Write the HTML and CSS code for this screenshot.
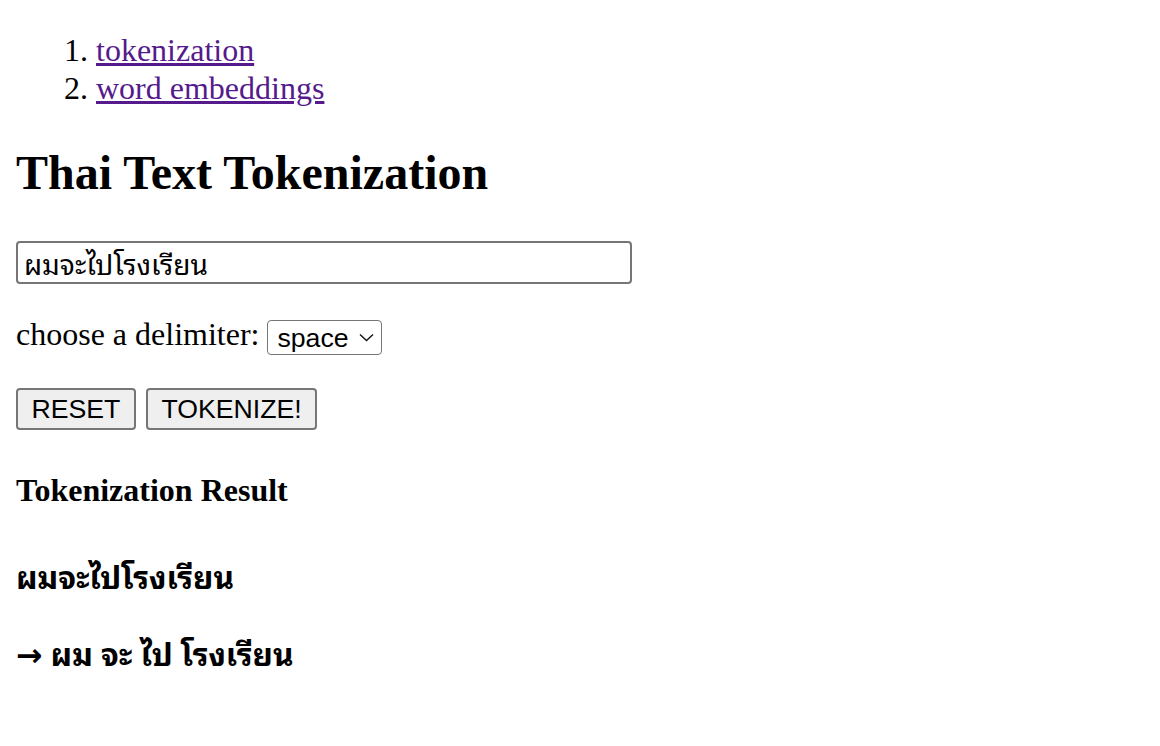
FILE: index.html
```html
<!DOCTYPE html>
<html lang="en">
<head>
<meta charset="utf-8">
<title>Thai Text Tokenization</title>
<link rel="stylesheet" href="styles.css">
</head>
<body>
<ol class="nav">
  <li><a href="#" class="nav-link">tokenization</a></li>
  <li><a href="#" class="nav-link">word embeddings</a></li>
</ol>
<h1 class="title">Thai Text Tokenization</h1>
<form class="tok-form">
  <input class="text-input" type="text" value="ผมจะไปโรงเรียน">
  <p class="delim">choose a delimiter: <span class="select-wrap"><select class="delim-select"><option>space</option></select><svg class="chev" width="15" height="9" viewBox="0 0 15 9"><path d="M1 1.5 L7.5 7.5 L14 1.5" fill="none" stroke="#111" stroke-width="1.4"/></svg></span></p>
  <div class="actions">
    <button type="button" class="btn">RESET</button>
    <button type="button" class="btn">TOKENIZE!</button>
  </div>
</form>
<h4 class="result-title">Tokenization Result</h4>
<h3 class="thai">ผมจะไปโรงเรียน</h3>
<h3 class="thai">→ ผม จะ ไป โรงเรียน</h3>
</body>
</html>
```
FILE: styles.css
```css
html, body {
  background: #fff;
}
body {
  margin: 0;
  padding: 0 16px;
  font-family: "Liberation Serif", "Times New Roman", serif;
  font-size: 32px;
  color: #000;
}
.nav {
  margin: 31px 0 0;
  padding-left: 80px;
  line-height: 38px;
}
.nav-link {
  color: #551a8b;
}
.title {
  font-size: 48px;
  margin: 39px 0 0;
  line-height: 54px;
}
.tok-form {
  margin-top: 41px;
}
.text-input {
  box-sizing: border-box;
  width: 616px;
  height: 43px;
  border: 2px solid #767676;
  border-radius: 4px;
  padding: 0 6px;
  font-family: "Noto Sans Thai Looped", "Noto Sans Thai", "Thonburi", "Tlwg Typo", "Loma", "Garuda", "DejaVu Sans", sans-serif;
  font-size: 28px;
  color: #000;
  display: block;
}
.delim {
  margin: 32px 0 0;
  line-height: 36px;
}
.select-wrap {
  position: relative;
  display: inline-block;
  vertical-align: middle;
}
.delim-select {
  appearance: none;
  -webkit-appearance: none;
  box-sizing: border-box;
  height: 35px;
  width: 115px;
  border: 1.5px solid #767676;
  border-radius: 4px;
  background: #fff;
  font-family: "Liberation Sans", Arial, sans-serif;
  font-size: 26.67px;
  padding: 0 0 0 9px;
  color: #000;
  display: block;
}
.chev {
  position: absolute;
  right: 8px;
  top: 13px;
  pointer-events: none;
}
.actions {
  display: flex;
  gap: 10px;
  margin-top: 33px;
}
.btn {
  box-sizing: border-box;
  height: 42px;
  padding: 0 13.5px;
  border: 2px solid #767676;
  border-radius: 4px;
  background: #efefef;
  font-family: "Liberation Sans", Arial, sans-serif;
  font-size: 26.67px;
  color: #000;
}
.result-title {
  font-size: 32px;
  margin: 42px 0 0;
  line-height: 36px;
}
.thai {
  font-family: "Noto Sans Thai Looped", "Noto Sans Thai", "Thonburi", "Tlwg Typo", "Loma", "Garuda", "DejaVu Sans", sans-serif;
  font-size: 31.5px;
  margin: 47px 0 0;
  line-height: 40px;
}
.thai + .thai {
  margin-top: 37px;
}
```
